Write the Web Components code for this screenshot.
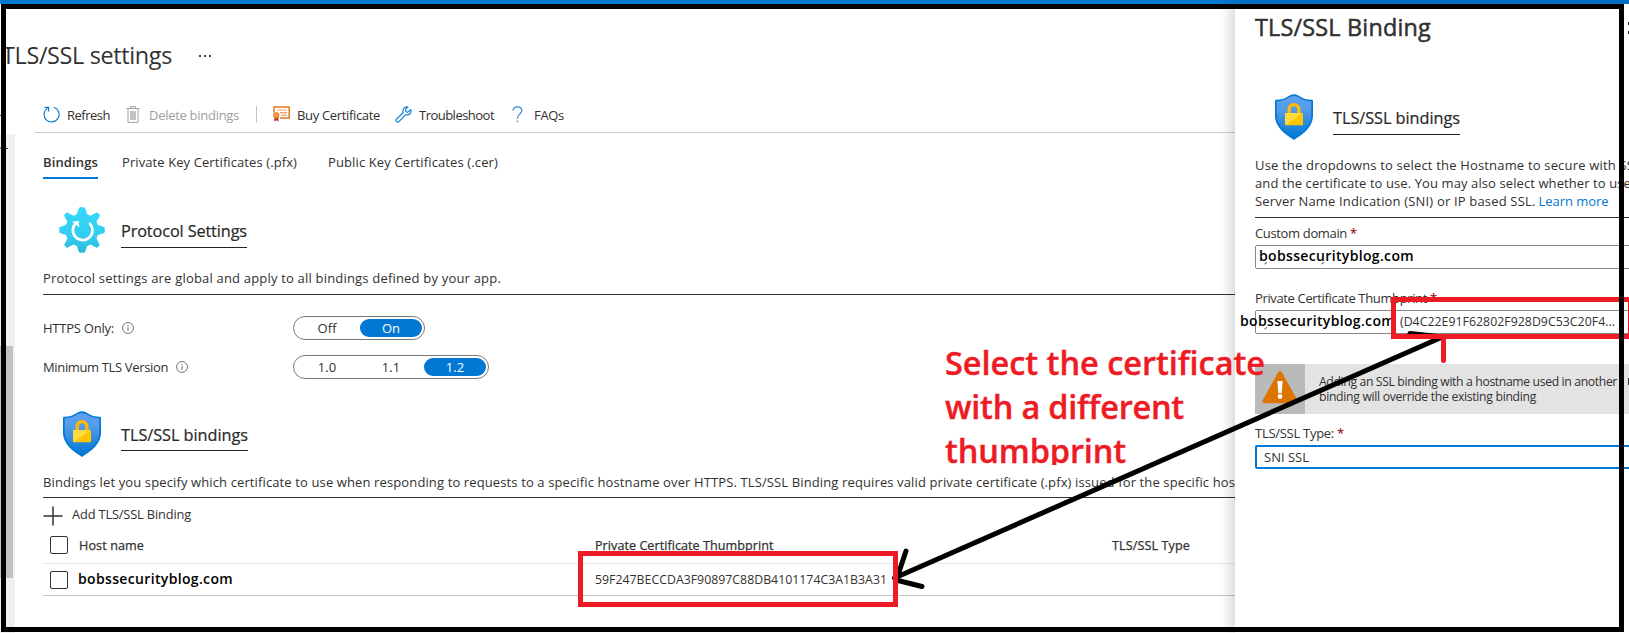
<!DOCTYPE html>
<html lang="en">
<head>
<meta charset="utf-8">
<title>TLS/SSL settings</title>
<style>
html,body{margin:0;padding:0;background:#fff}
body{width:1629px;height:633px;overflow:hidden;font-family:"Open Sans","Noto Sans",sans-serif;font-size:13px;line-height:18px;color:#323130}
</style>
</head>
<body>
<tls-page></tls-page>
<script>
const define = (name, html, setup) => {
  const tpl = document.createElement('template');
  tpl.innerHTML = html;
  customElements.define(name, class extends HTMLElement {
    connectedCallback() {
      if (this.shadowRoot) return;
      this.attachShadow({ mode: 'open' }).append(tpl.content.cloneNode(true));
      if (setup) setup(this, this.shadowRoot);
    }
  });
};

/* One line of text whose tracking is adjusted to a given measure (w, px). */
define('fit-text', `<style>:host{display:block;white-space:nowrap;flex:none}span{display:inline-block}</style><span><slot></slot></span>`,
  (el, root) => {
    const w = parseFloat(el.getAttribute('w'));
    if (!w) return;
    const span = root.querySelector('span');
    const n = el.textContent.length;
    const natural = span.getBoundingClientRect().width;
    span.style.letterSpacing = ((w - natural) / n).toFixed(4) + 'px';
  });

const icons = {
  refresh: `<svg width="17" height="17" viewBox="0 0 17 17" fill="none" stroke="#0078d4" stroke-width="1.1"><path d="M10.8 1.3A7.5 7.5 0 1 1 4.6 2.1"/><path d="M1.6 1.4H5.6V5.4"/></svg>`,
  trash: `<svg width="14" height="17" viewBox="0 0 14 17" fill="none" stroke="#a3a19f"><path d="M.5 2.5h13M4.5 2.3V.6h5v1.7M2 2.8v13.6h10V2.8"/><rect x="4" y="5" width="6" height="9" fill="#c4c4c4" stroke="none"/></svg>`,
  cert: `<svg width="17" height="16" viewBox="0 0 17 16"><path d="M1 6.500V.9h15.200v11.2H7" fill="none" stroke="#e27a1c" stroke-width="1.5"/><path d="M4 4h10M7 6.6h7M8 9.1h6" stroke="#f0a15c" stroke-width="1.1"/><path d="M1.4 10.5v5l2-1.2 2 1.2v-5z" fill="#b5292c"/><circle cx="3.2" cy="9.4" r="2.8" fill="#f59b3c" stroke="#e0621b" stroke-width=".7"/></svg>`,
  wrench: `<svg width="17" height="17" viewBox="0 0 17 17" fill="none" stroke="#0078d4" stroke-width="1.1" stroke-linejoin="round"><path d="M12.900 1 10.500 3.600l.4 2.100 2.100.4L15.800 3.600c.8 2.600-.8 5.100-3.300 5.300-.7.100-1.300 0-1.800-.2L4 15.600c-.7.700-1.800.700-2.500 0s-.7-1.800 0-2.500L8.200 6.500C7.300 3.500 9.400.300 12.900 1z"/></svg>`,
  question: `<svg width="11" height="17" viewBox="0 0 11 17"><path d="M1 4.800C1 2.300 2.900.800 5.400.800s4.400 1.500 4.400 3.800c0 3.500-4.500 3.600-4.500 8.200" fill="none" stroke="#2b88d8" stroke-width="1.200"/><rect x="4.600" y="14.800" width="1.400" height="1.400" fill="#2b88d8"/></svg>`,
  info: `<svg width="12" height="12" viewBox="0 0 12 12"><circle cx="6" cy="6" r="5.450" fill="none" stroke="#666" stroke-width=".9"/><path d="M6 5.200v3.700" stroke="#666"/><rect x="5.500" y="3" width="1" height="1.200" fill="#666"/></svg>`,
  plus: `<svg width="20" height="20" viewBox="0 0 20 20"><path d="M.5 10h19M10 .5v19" stroke="#323130" stroke-width="1.500"/></svg>`,
  gear: `<svg width="46" height="46" viewBox="0 0 46 46"><defs><linearGradient id="g" x1="0" y1="1" x2="0" y2="0"><stop offset="0" stop-color="#2fb8dc"/><stop offset=".35" stop-color="#32cdf0"/><stop offset="1" stop-color="#35d8fb"/></linearGradient></defs><g fill="url(#g)"><path d="M19.900 1.200 Q20.300.300 21.200.300H24.800Q25.700.300 26.100 1.200L28.200 7.300 31.600 8.700 37.300 5.700Q38.200 5.300 38.900 6L40.500 7.600Q41.200 8.300 40.700 9.200L37.500 14.600 38.900 18 45 20.100Q45.800 20.400 45.800 21.300V24.700Q45.800 25.600 45 25.900L38.900 28 37.500 31.400 40.400 37.200Q40.900 38 40.200 38.700L38.600 40.300Q37.900 41 37 40.500L31.400 37.500 28.200 38.900 26.100 44.900Q25.800 45.700 24.900 45.700H21.100Q20.200 45.700 19.900 44.900L17.800 38.900 14.400 37.500 8.900 40.500Q8 41 7.300 40.300L5.700 38.700Q5 38 5.500 37.200L8.400 31.400 7 28 1 25.900Q.200 25.600.200 24.700V21.300Q.200 20.400 1 20.100L7 18 8.400 14.600 5.300 9.200Q4.800 8.300 5.500 7.600L7.100 6Q7.800 5.300 8.700 5.700L14.400 8.700 17.800 7.300Z"/></g><path d="M31 16.800A9.800 9.800 0 1 1 16.600 16.500" fill="none" stroke="#fff" stroke-width="2.700" stroke-linecap="round"/><path d="M13.200 14.800 19.700 13.700 20.200 20.200Z" fill="#fff"/></svg>`,
  shield: `<svg width="38" height="46" viewBox="0 0 38 46"><defs><linearGradient id="s" x1="0" y1="0" x2="0" y2="1"><stop offset="0" stop-color="#5ea0ef"/><stop offset=".3" stop-color="#559cec"/><stop offset="1" stop-color="#0078d4"/></linearGradient></defs><path d="M19 .200C13.500.200 12 5.700 1.300 5.700Q0 5.700 0 7V21.500C0 34 12 41.500 19 45.900C26 41.500 38 34 38 21.500V7Q38 5.700 36.700 5.700C26 5.700 24.500.200 19 .200Z" fill="#0078d4"/><path d="M19 2C13.800 2 12 7 1.700 7.200V21.600C1.700 33 12.500 39.800 19 44C25.500 39.800 36.300 33 36.300 21.600V7.200C26 7 24.200 2 19 2Z" fill="url(#s)"/><path d="M14.200 20V15.400a4.800 4.800 0 0 1 9.600 0V20" fill="none" stroke="#ffb900" stroke-width="3.400"/><rect x="10" y="19" width="18" height="12.200" rx=".8" fill="#ffc400"/><path d="M10.400 19H27.600L11 31Q10 31 10 30V20Q10 19 10.400 19Z" fill="#ffe152" opacity=".75"/></svg>`,
  warning: `<svg width="36" height="33" viewBox="0 0 36 33"><path d="M16.100 1.500Q18-1 19.900 1.500L35 28.500Q36.500 32 33.500 32.300H2.500Q-.5 32 1 28.500Z" fill="#db7500"/><path d="M15.400 10H20.600L19.800 22H16.200Z" fill="#fff"/><circle cx="18" cy="25.500" r="2.400" fill="#fff"/></svg>`
};
define('az-icon', `<style>:host{display:block;flex:none}svg{display:block}</style>`,
  (el, root) => root.append(document.createRange().createContextualFragment(icons[el.getAttribute('name')])));

define('command-button', `<style>:host{display:flex;align-items:flex-start;height:18px}:host([disabled]){color:#a19f9d}</style>
<slot name="icon"></slot><slot></slot>`);

define('tab-item', `<style>:host{display:block;padding-bottom:6px;border-bottom:2px solid transparent}
:host([selected]){border-color:#0078d4;font-weight:600}</style><slot></slot>`);

define('section-heading', `<style>:host{display:flex;height:46px}
.ic{display:flex;justify-content:center;width:46px;margin:0 16px}
.tx{margin-top:12px;align-self:flex-start;font-size:16.3px;line-height:24px;padding-bottom:calc(var(--gap,3px) + 1px);border-bottom:1px solid #222;color:#292827;-webkit-text-stroke:.2px #292827}
</style><div class="ic"><slot name="icon"></slot></div><div class="tx"><slot></slot></div>`);

define('pill-switch', `<style>:host{display:flex;box-sizing:border-box;height:24px;border:1px solid #7a7876;border-radius:12px;padding:2px}
::slotted(*){box-sizing:border-box;width:62px;margin-right:2px;height:18px;border-radius:9px;text-align:center}
::slotted([on]){background:#0078d4;color:#fff}::slotted(:last-child){margin-right:0}</style><slot></slot>`);

define('check-box', `<style>:host{display:block;flex:none;box-sizing:border-box;width:18px;height:18px;border:1px solid #323130;border-radius:2px;background:#fff}</style>`);

define('form-label', `<style>:host{display:flex;gap:3px}b{color:#a4262c;font-weight:600}</style><slot></slot><b>*</b>`);
define('select-field', `<style>:host{display:flex;align-items:center;box-sizing:border-box;height:24px;margin-top:3px;border:1px solid #8a8886;border-radius:2px;background:#fff}
:host([focused]){border:2px solid #0078d4}</style><slot></slot>`);

define('left-page', `<style>
:host{display:flex;flex-direction:column;width:1235px;height:629px;overflow:hidden;flex:none}
.title{display:flex;align-items:flex-start;padding:35px 0 0 2px;height:32px;line-height:32px;font-size:23.400px}
.dots{display:flex;gap:3px;margin:16px 0 0 27px}.dots i{width:2px;height:2px;background:#444}
.bar{display:flex;align-items:flex-start;height:26px;margin:35px 0 0 35px;padding-left:8px;border-bottom:1px solid #ccc}
.sep{width:1px;height:17px;background:#c8c6c4;margin:0 16px 0 17px}
.body{display:flex;flex:1}
.scroll{width:15px;margin-top:1px;background:#f0f0f0;flex:none}.thumb{width:13px;height:232px;margin-top:212px;background:#c1c1c1}
.content{margin-left:28px;width:1192px;overflow:hidden}
.tabs{display:flex;padding-top:20px}
.desc{margin-top:16px;padding-bottom:7px;border-bottom:1px solid #323130}
.row{display:flex;align-items:center;height:24px}.lab{display:flex;align-items:center;width:250px}
.add{display:flex;align-items:center;gap:9px;height:20px;margin-top:8px}
.add fit-text{padding-bottom:4px;font-size:12.800px}
.tr{display:grid;grid-template-columns:7px 28px 517px 517px 1fr;align-items:center;height:31px;border-bottom:1px solid #c8c6c4}
.th{height:37px;border-color:#e8e8e8;-webkit-text-stroke:.25px #323130;font-size:12.600px}
.th fit-text{padding-top:3px}
.host{font-weight:600;color:#000;font-size:14px;line-height:20px;padding-bottom:2px}
</style>
<div class="title"><fit-text w="170">TLS/SSL settings</fit-text><div class="dots"><i></i><i></i><i></i></div></div>
<div class="bar">
<command-button><az-icon slot="icon" name="refresh"></az-icon><fit-text w="43" style="margin-left:7px">Refresh</fit-text></command-button>
<command-button disabled style="margin-left:16px"><az-icon slot="icon" name="trash"></az-icon><fit-text w="90" style="margin-left:9px">Delete bindings</fit-text></command-button>
<div class="sep"></div>
<command-button><az-icon slot="icon" name="cert"></az-icon><fit-text w="83" style="margin-left:7px">Buy Certificate</fit-text></command-button>
<command-button style="margin-left:15px"><az-icon slot="icon" name="wrench"></az-icon><fit-text w="75" style="margin-left:7px">Troubleshoot</fit-text></command-button>
<command-button style="margin-left:18px"><az-icon slot="icon" name="question"></az-icon><fit-text w="30" style="margin-left:11px">FAQs</fit-text></command-button>
</div>
<div class="body"><div class="scroll"><div class="thumb"></div></div>
<div class="content">
<div class="tabs"><tab-item selected><fit-text w="55">Bindings</fit-text></tab-item>
<tab-item style="margin-left:24px"><fit-text w="175">Private Key Certificates (.pfx)</fit-text></tab-item>
<tab-item style="margin-left:31px"><fit-text w="170">Public Key Certificates (.cer)</fit-text></tab-item></div>
<section-heading style="margin-top:28px"><az-icon slot="icon" name="gear"></az-icon><fit-text w="126">Protocol Settings</fit-text></section-heading>
<div class="desc"><fit-text w="458">Protocol settings are global and apply to all bindings defined by your app.</fit-text></div>
<div class="row" style="margin-top:21px"><div class="lab"><fit-text w="71">HTTPS Only:</fit-text><az-icon name="info" style="margin-left:8px"></az-icon></div>
<pill-switch><fit-text>Off</fit-text><fit-text on>On</fit-text></pill-switch></div>
<div class="row" style="margin-top:15px"><div class="lab"><fit-text w="125">Minimum TLS Version</fit-text><az-icon name="info" style="margin-left:8px"></az-icon></div>
<pill-switch><fit-text>1.0</fit-text><fit-text>1.1</fit-text><fit-text on>1.2</fit-text></pill-switch></div>
<section-heading style="margin-top:32px;--gap:2px"><az-icon slot="icon" name="shield"></az-icon><fit-text w="127">TLS/SSL bindings</fit-text></section-heading>
<div class="desc" style="padding-bottom:6px"><fit-text w="1192">Bindings let you specify which certificate to use when responding to requests to a specific hostname over HTTPS. TLS/SSL Binding requires valid private certificate (.pfx) issued for the specific hos</fit-text></div>
<div class="add"><az-icon name="plus"></az-icon><fit-text w="119">Add TLS/SSL Binding</fit-text></div>
<div class="tr th"><span></span><check-box></check-box><fit-text w="65" style="margin-left:1px">Host name</fit-text><fit-text w="178.500">Private Certificate Thumbprint</fit-text><fit-text w="78">TLS/SSL Type</fit-text></div>
<div class="tr"><span></span><check-box></check-box><fit-text class="host" w="155">bobssecurityblog.com</fit-text><fit-text w="292" style="font-size:12.300px;padding-top:1px">59F247BECCDA3F90897C88DB4101174C3A1B3A31</fit-text></div>
</div></div>`);

define('binding-blade', `<style>
:host{display:block;flex:1;height:629px;background:#fff;box-shadow:-3px 0 14px rgba(0,0,0,.2);position:relative;overflow:visible}
.in{padding:7px 0 0 20px;width:394px}
.title{font-size:23.400px;line-height:32px;-webkit-text-stroke:.5px #323130}
.p{margin-top:16px;padding-bottom:7px;border-bottom:1px solid #323130}
.line{display:flex}.link{color:#0078d4;margin-left:3px}
.note{display:flex;height:50px;margin-top:30px;background:#e3e3e3}
.ic{width:50px;background:#bababa;display:flex;align-items:flex-start;justify-content:center;padding-top:7px;box-sizing:border-box}
.msg{padding:10px 0 0 14px;font-size:12.200px;line-height:15px}
.host{font-weight:600;color:#000;font-size:14px}
</style>
<div class="in"><div class="title"><fit-text w="176">TLS/SSL Binding</fit-text></div>
<section-heading style="margin-top:51px"><az-icon slot="icon" name="shield"></az-icon><fit-text w="127">TLS/SSL bindings</fit-text></section-heading>
<div class="p"><fit-text w="386">Use the dropdowns to select the Hostname to secure with SSL</fit-text><fit-text w="376">and the certificate to use. You may also select whether to use</fit-text>
<div class="line"><fit-text w="280.500">Server Name Indication (SNI) or IP based SSL.</fit-text><fit-text class="link" w="70">Learn more</fit-text></div></div>
<form-label style="margin-top:6px"><fit-text w="92">Custom domain</fit-text></form-label>
<select-field><fit-text class="host" w="155" style="margin-left:3px;margin-top:-3px">bobssecurityblog.com</fit-text></select-field>
<form-label style="margin-top:20px"><fit-text w="172">Private Certificate Thumbprint</fit-text></form-label>
<select-field><fit-text class="host" w="155" style="margin-left:-16px;margin-top:-3px">bobssecurityblog.com</fit-text><fit-text w="215" style="margin-left:5px;font-size:12.300px">(D4C22E91F62802F928D9C53C20F4...</fit-text></select-field>
<div class="note"><div class="ic"><az-icon name="warning"></az-icon></div><div class="msg"><fit-text w="298">Adding an SSL binding with a hostname used in another</fit-text><fit-text w="217">binding will override the existing binding</fit-text></div></div>
<form-label style="margin-top:10px"><fit-text w="79">TLS/SSL Type:</fit-text></form-label>
<select-field focused><fit-text w="45" style="margin-left:7px">SNI SSL</fit-text></select-field>
</div>`);

/* Hand-drawn annotations that lie over the whole page. */
define('markup-layer', `<style>:host{position:absolute;inset:0;display:block;pointer-events:none}
svg{position:absolute;inset:0}
.note{position:absolute;left:945px;top:341px;height:124px;overflow:hidden;color:#ed1c24;font-size:32.500px;line-height:44px;font-weight:600;-webkit-text-stroke:.4px #ed1c24}</style>
<div class="note"><fit-text w="320">Select the certificate</fit-text><fit-text w="239">with a different</fit-text><fit-text w="181">thumbprint</fit-text></div>
<svg width="1629" height="633" viewBox="0 0 1629 633" fill="none">
<path d="M1264.500 264q2-.3 2-2M1321.500 264q2-.3 2-2" stroke="#555"/>
<path d="M1264.500 329q2-.3 2-2" stroke="#555"/>
<g stroke="#000" stroke-width="5" stroke-linecap="round"><path d="M894.500 578 1440 338M906 551 898 575M896 580 922 586.500M1410 333.500 1438 336.500"/></g>
<g stroke="#ed1c24" stroke-width="5"><rect x="580.500" y="553.500" width="315" height="51"/><path d="M1643 299.500H1393.500V336.500H1643" /><path d="M1443.500 337V360.500" stroke-linecap="round"/><path d="M1629 299V337" stroke-width="2"/></g>
<rect x="3.500" y="6.500" width="1618" height="623" stroke="#000" stroke-width="5"/>
<path d="M1628.500 22v3M1628.500 31v3M1628.500 378v7M0 115.500h1M0 148h1.500M6 148.500h2" stroke="#333"/>
</svg>`);

define('tls-page', `<style>:host{display:block;position:relative;width:1629px;height:633px;overflow:hidden;background:#fff}
.top{height:4px;background:#0078d4}.cols{display:flex}</style>
<div class="top"></div><div class="cols"><left-page></left-page><binding-blade></binding-blade></div><markup-layer></markup-layer>`);
</script>
</body>
</html>
